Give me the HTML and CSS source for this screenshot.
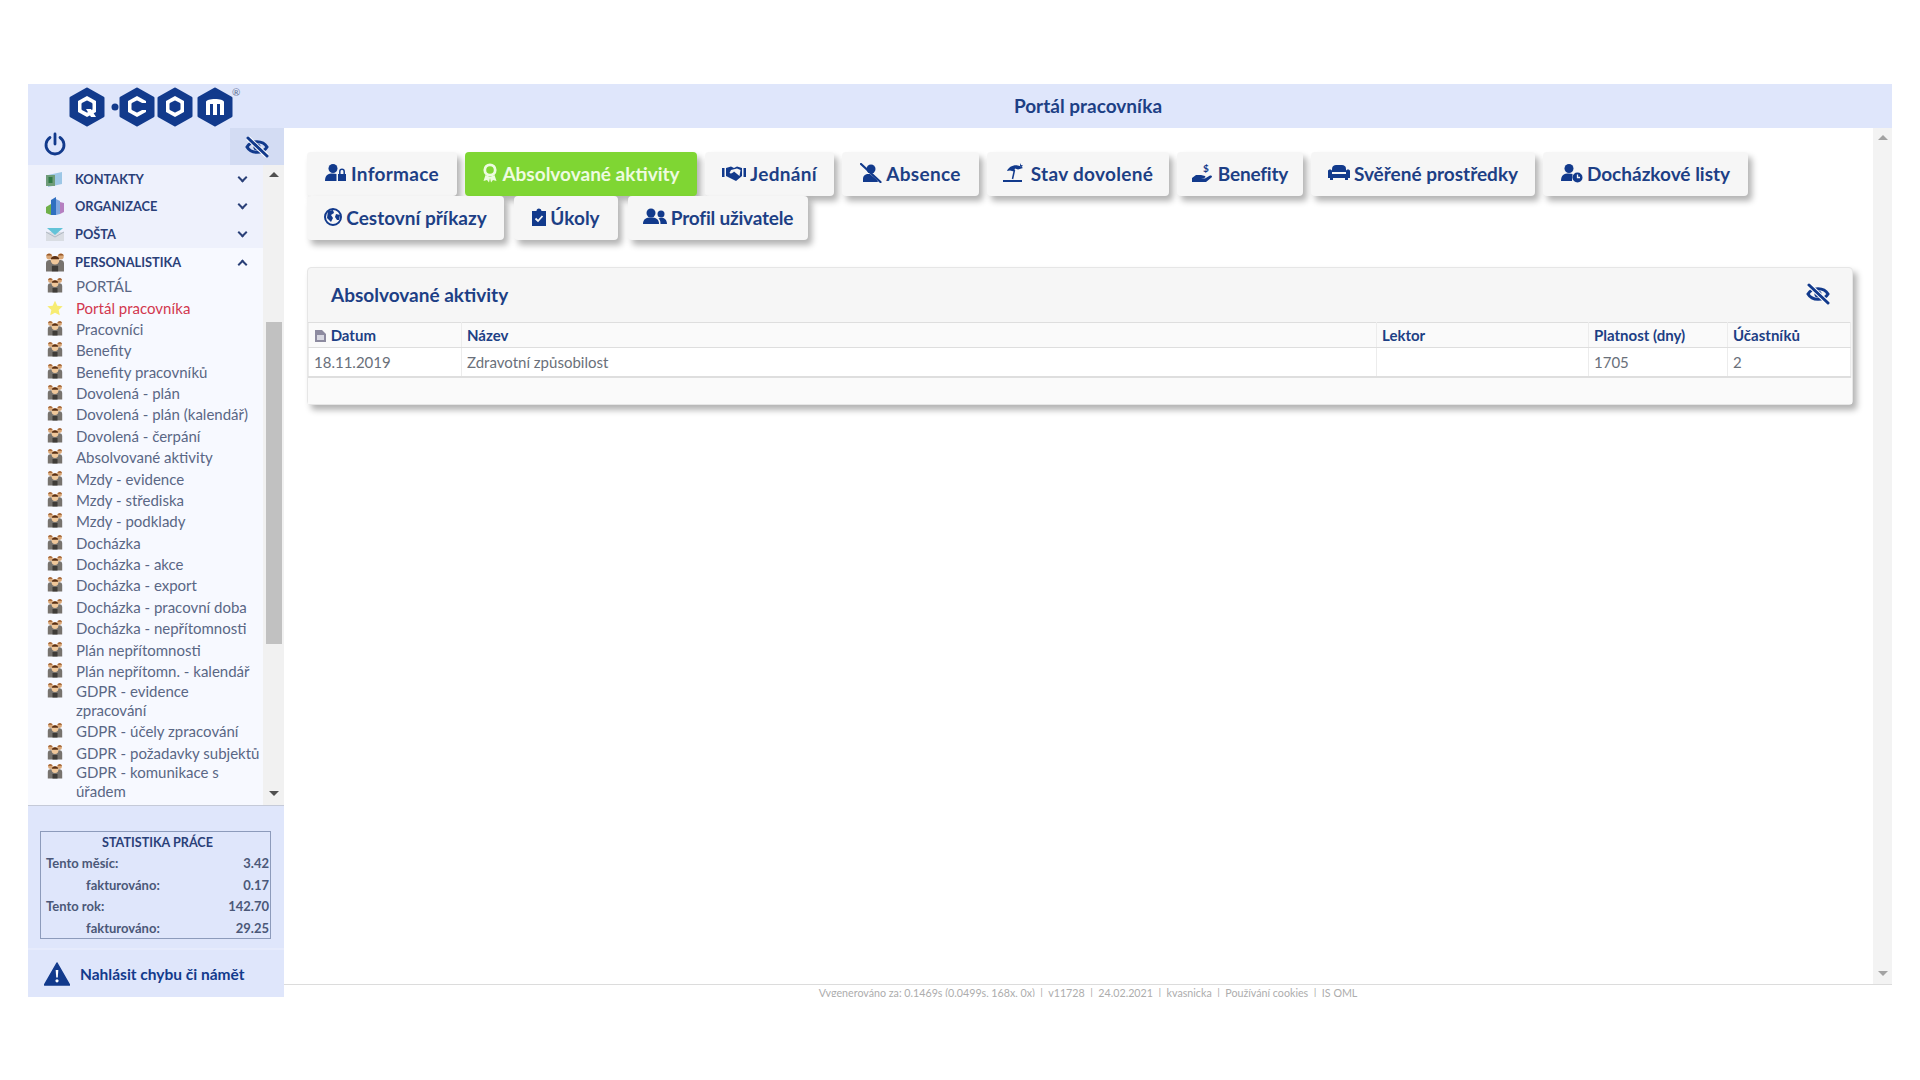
FILE: index.html
```html
<!DOCTYPE html>
<html lang="cs">
<head>
    <meta charset="UTF-8">
    <title>Portál pracovníka</title>
    <link rel="stylesheet" href="styles.css">
</head>
<body>
    <svg class="defs" width="0" height="0">
        <symbol id="i-eye" viewBox="0 0 24 24">
            <path d="M2 12C6 5 18 5 22 12C18 19 6 19 2 12Z" fill="none" stroke="currentColor" stroke-width="3"/>
            <circle cx="12" cy="12" r="3.6" fill="currentColor"/>
            <path d="M3 3L22 21" stroke="#fff" stroke-width="5"/>
            <path d="M3 3L22 21" stroke="currentColor" stroke-width="3" stroke-linecap="round"/>
        </symbol>
        <symbol id="i-staff" viewBox="0 0 16 16">
            <circle cx="3.400" cy="3.600" r="2.400" fill="#d9a777"/>
            <circle cx="12.600" cy="3.600" r="2.400" fill="#d9a777"/>
            <path d="M1 2.800C1.500 .8 5 .8 5.500 2.800ZM10.500 2.800C11 .8 14.500 .8 15 2.800Z" fill="#9a5a2a"/>
            <path d="M.8 15.500V9C.8 6.500 3 6 5 6.500H11C13 6 15.200 6.500 15.200 9V15.500Z" fill="#77736e"/>
            <circle cx="8" cy="6.500" r="3.400" fill="#efc79a"/>
            <path d="M4.600 5.800C5 2.400 11 2.400 11.400 5.800Z" fill="#5a3015"/>
            <path d="M5.500 11H10.500V15.500H5.500Z" fill="#3f3c38"/>
        </symbol>
    </svg>

    <div class="app">
        <aside class="sidebar">
            <div class="logo">
                <svg width="190" height="44" viewBox="0 0 190 44" role="img" aria-label="Q-COM">
                    <g>
                        <polygon class="hex" points="27,5 43,14 43,32 27,41 11,32 11,14"/>
                        <polygon class="hex-in" points="27,12 36,17 36,28 27,33 18,28 18,17"/>
                        <polygon class="hex" points="27,18 31,20 31,25 27,27 23,25 23,20"/>
                        <path class="hex-in" d="M26 25H31L36 33H31Z"/>
                    </g>
                    <circle cx="55" cy="23" r="3.500" fill="#123a8c"/>
                    <g>
                        <polygon class="hex" points="77,5 93,14 93,32 77,41 61,32 61,14"/>
                        <polygon class="hex-in" points="77,12 86,17 86,28 77,33 68,28 68,17"/>
                        <polygon class="hex" points="77,18 81,20 81,25 77,27 73,25 73,20"/>
                        <path class="hex" d="M79 20.500H88V24.500H79Z"/>
                    </g>
                    <g>
                        <polygon class="hex" points="115,5 131,14 131,32 115,41 99,32 99,14"/>
                        <polygon class="hex-in" points="115,12 124,17 124,28 115,33 106,28 106,17"/>
                        <polygon class="hex" points="115,18 119,20 119,25 115,27 111,25 111,20"/>
                    </g>
                    <g>
                        <polygon class="hex" points="155,5 171,14 171,32 155,41 139,32 139,14"/>
                        <path class="hex-in" d="M146 31V18C146 14 164 14 164 18V31H160V20H157V31H153V20H150V31Z"/>
                    </g>
                    <text class="reg" x="172" y="12">®</text>
                </svg>
            </div>
            <div class="tools">
                <svg class="power" width="24" height="24" viewBox="0 0 24 24">
                    <path d="M7 5.500A9 9 0 1 0 17 5.500" fill="none" stroke="currentColor" stroke-width="2.800" stroke-linecap="round"/>
                    <path d="M12 2V12" stroke="currentColor" stroke-width="2.800" stroke-linecap="round"/>
                </svg>
                <div class="tools-eye"><svg width="24" height="24"><use href="#i-eye"/></svg></div>
            </div>

            <div class="menu">
                <div class="menu-list">
                    <div class="group">
                        <svg class="group-icon" width="20" height="20" viewBox="0 0 20 20">
                            <path d="M3 6L17 3V15L3 18Z" fill="#9dc7e6"/>
                            <path d="M1 6H10V17H1Z" fill="#6f9c7a"/>
                            <path d="M3.500 8H7.500V14H3.500Z" fill="#2f7a45"/>
                        </svg>
                        <span>KONTAKTY</span><i class="chev"></i>
                    </div>
                    <div class="group">
                        <svg class="group-icon" width="20" height="20" viewBox="0 0 20 20">
                            <path d="M1 11L6 8V19L1 17Z" fill="#6fb04a"/>
                            <path d="M6 4L11 1V19L6 19Z" fill="#2f6fc0"/>
                            <path d="M11 3L15 5V18L11 19Z" fill="#7fa6e0"/>
                            <path d="M15 6L19 7V16L15 18Z" fill="#b57fc0"/>
                        </svg>
                        <span>ORGANIZACE</span><i class="chev"></i>
                    </div>
                    <div class="group">
                        <svg class="group-icon" width="20" height="20" viewBox="0 0 20 20">
                            <path d="M1 8H19V17H1Z" fill="#d9dde3"/>
                            <path d="M2 4H18L10 11Z" fill="#63c3d8"/>
                            <path d="M1 8L10 13L19 8" fill="none" stroke="#b0b8c4"/>
                        </svg>
                        <span>POŠTA</span><i class="chev"></i>
                    </div>
                    <div class="group group-open">
                        <svg class="group-icon" width="20" height="20"><use href="#i-staff"/></svg>
                        <span>PERSONALISTIKA</span><i class="chev chev-up"></i>
                    </div>
                    <ul class="items">
                        <li><svg width="16" height="16"><use href="#i-staff"/></svg><span>PORTÁL</span></li>
                        <li class="current">
                            <svg width="18" height="18" viewBox="0 0 24 24"><path d="M12 1L15.500 8.500L23.500 9.500L17.500 15L19.200 23L12 19L4.800 23L6.500 15L.5 9.500L8.500 8.500Z" fill="#f7ec72"/></svg>
                            <span>Portál pracovníka</span>
                        </li>
                        <li><svg width="16" height="16"><use href="#i-staff"/></svg><span>Pracovníci</span></li>
                        <li><svg width="16" height="16"><use href="#i-staff"/></svg><span>Benefity</span></li>
                        <li><svg width="16" height="16"><use href="#i-staff"/></svg><span>Benefity pracovníků</span></li>
                        <li><svg width="16" height="16"><use href="#i-staff"/></svg><span>Dovolená - plán</span></li>
                        <li><svg width="16" height="16"><use href="#i-staff"/></svg><span>Dovolená - plán (kalendář)</span></li>
                        <li><svg width="16" height="16"><use href="#i-staff"/></svg><span>Dovolená - čerpání</span></li>
                        <li><svg width="16" height="16"><use href="#i-staff"/></svg><span>Absolvované aktivity</span></li>
                        <li><svg width="16" height="16"><use href="#i-staff"/></svg><span>Mzdy - evidence</span></li>
                        <li><svg width="16" height="16"><use href="#i-staff"/></svg><span>Mzdy - střediska</span></li>
                        <li><svg width="16" height="16"><use href="#i-staff"/></svg><span>Mzdy - podklady</span></li>
                        <li><svg width="16" height="16"><use href="#i-staff"/></svg><span>Docházka</span></li>
                        <li><svg width="16" height="16"><use href="#i-staff"/></svg><span>Docházka - akce</span></li>
                        <li><svg width="16" height="16"><use href="#i-staff"/></svg><span>Docházka - export</span></li>
                        <li><svg width="16" height="16"><use href="#i-staff"/></svg><span>Docházka - pracovní doba</span></li>
                        <li><svg width="16" height="16"><use href="#i-staff"/></svg><span>Docházka - nepřítomnosti</span></li>
                        <li><svg width="16" height="16"><use href="#i-staff"/></svg><span>Plán nepřítomnosti</span></li>
                        <li><svg width="16" height="16"><use href="#i-staff"/></svg><span>Plán nepřítomn. - kalendář</span></li>
                        <li class="two-line"><svg width="16" height="16"><use href="#i-staff"/></svg><span>GDPR - evidence<br>zpracování</span></li>
                        <li><svg width="16" height="16"><use href="#i-staff"/></svg><span>GDPR - účely zpracování</span></li>
                        <li><svg width="16" height="16"><use href="#i-staff"/></svg><span>GDPR - požadavky subjektů</span></li>
                        <li class="two-line"><svg width="16" height="16"><use href="#i-staff"/></svg><span>GDPR - komunikace s<br>úřadem</span></li>
                    </ul>
                </div>
                <div class="scrollbar scrollbar-menu">
                    <i class="arrow-up"></i>
                    <div class="thumb"></div>
                    <i class="arrow-down"></i>
                </div>
            </div>

            <div class="stats">
                <div class="stats-box">
                    <div class="stats-title">STATISTIKA PRÁCE</div>
                    <div class="stats-row"><span>Tento měsíc:</span><span>3.42</span></div>
                    <div class="stats-row stats-sub"><span>fakturováno:</span><span>0.17</span></div>
                    <div class="stats-row"><span>Tento rok:</span><span>142.70</span></div>
                    <div class="stats-row stats-sub"><span>fakturováno:</span><span>29.25</span></div>
                </div>
            </div>

            <div class="report">
                <svg width="26" height="24" viewBox="0 0 26 24">
                    <path d="M13 1L25.500 23H.5Z" fill="#123a8c" stroke="#123a8c" stroke-width="1.500" stroke-linejoin="round"/>
                    <path d="M11.700 8H14.300L13.800 15.500H12.200Z" fill="#fff"/>
                    <circle cx="13" cy="18.800" r="1.600" fill="#fff"/>
                </svg>
                <span>Nahlásit chybu či námět</span>
            </div>
        </aside>

        <main class="main">
            <header class="title-bar">Portál pracovníka</header>
            <div class="body-wrap">
                <div class="content">
                    <nav class="tabs">
                        <a class="tab w-info wide">
                            <svg width="22" height="20" viewBox="0 0 22 20"><circle cx="8" cy="5.500" r="4.500"/><path d="M0 18C0 12 3 10.500 8 10.500C9.500 10.500 10.500 10.700 11.500 11V18Z"/><path d="M13 11H21V18H13Z"/><path d="M14.800 11V8.500A2.200 2.200 0 0 1 19.200 8.500V11" fill="none" stroke="currentColor" stroke-width="1.500"/></svg>
                            Informace
                        </a>
                        <a class="tab tab-active w-abs">
                            <svg width="16" height="20" viewBox="0 0 16 20"><circle cx="8" cy="7" r="5.200" fill="none" stroke="currentColor" stroke-width="2.800"/><path d="M3.500 12L1.500 18L5 17L7 19.500L8 15L9 19.500L11 17L14.500 18L12.500 12L8 14Z"/></svg>
                            Absolvované aktivity
                        </a>
                        <a class="tab w-jed wide">
                            <svg width="24" height="18" viewBox="0 0 24 18"><path d="M0 4H2.500V13H0ZM21.500 4H24V13H21.500Z"/><path d="M4 4L9 2.500L12 4L15 2.500L20 4V12L14 17L6 13L4 12ZM9 6L7.500 9C9 10 11 9 12 7.500L17.500 12L18.500 6L15 4.500Z" fill-rule="evenodd"/></svg>
                            Jednání
                        </a>
                        <a class="tab w-absence wide">
                            <svg width="22" height="20" viewBox="0 0 22 20"><circle cx="11" cy="6" r="4.500"/><path d="M3 19V16C3 12 6 10.500 10 11L17 17L18 19Z"/><path d="M1 1L20.500 19" stroke="currentColor" stroke-width="2.200" stroke-linecap="round"/></svg>
                            Absence
                        </a>
                        <a class="tab w-stav wide">
                            <svg width="24" height="20" viewBox="0 0 24 20"><path d="M4 8C6 2 15 0 20 5L15 6.500L12 5.500L11 8.500L7 7.500Z"/><path d="M11.500 7L9.500 16" stroke="currentColor" stroke-width="1.500"/><path d="M0 17H19V19H0Z"/><path d="M17 0L18 2L20 2.500L18.500 4L17 3Z"/></svg>
                            Stav dovolené
                        </a>
                        <a class="tab w-ben narrow">
                            <svg width="22" height="20" viewBox="0 0 22 20"><path d="M0 15L4 12H9L13 13C14 14 13 15 12 15H9L13 15.500L18 12.500C20 12 20.500 13.500 19.500 14.500L14 19H0Z"/><text class="icon-dollar" x="11" y="9">$</text></svg>
                            Benefity
                        </a>
                        <a class="tab w-sve">
                            <svg width="22" height="18" viewBox="0 0 22 18"><path d="M4 5C4 2 6 1 8 1H14C16 1 18 2 18 5V8H4Z"/><path d="M0 7C0 6 1 5.500 2 5.500C3 5.500 4 6 4 7V10H18V7C18 6 19 5.500 20 5.500C21 5.500 22 6 22 7V14H0Z"/><path d="M2 14H5V16H2ZM17 14H20V16H17Z"/></svg>
                            Svěřené prostředky
                        </a>
                        <a class="tab w-doch">
                            <svg width="22" height="20" viewBox="0 0 22 20"><circle cx="8" cy="5.500" r="4.500"/><path d="M0 18C0 12 3 10.500 8 10.500C9.500 10.500 10.500 10.700 11.500 11L11 18Z"/><circle cx="16.500" cy="14.500" r="5"/><path d="M16.500 11.500V14.500H19" fill="none" stroke="#f6f6f6" stroke-width="1.300"/></svg>
                            Docházkové listy
                        </a>
                        <a class="tab w-cest">
                            <svg width="18" height="18" viewBox="0 0 18 18"><circle cx="9" cy="9" r="8" fill="none" stroke="currentColor" stroke-width="2"/><path d="M4 3L9 2L10 5L7 7L9 10L7 14L3 10ZM16 7L12 6L11 9L13 12L15 12Z"/></svg>
                            Cestovní příkazy
                        </a>
                        <a class="tab w-ukoly">
                            <svg width="14" height="18" viewBox="0 0 14 18"><path d="M0 3H4.500A2.500 2.500 0 0 1 9.500 3H14V18H0Z"/><path d="M3.500 10.500L6 13L10.500 8" fill="none" stroke="#f6f6f6" stroke-width="1.800"/></svg>
                            Úkoly
                        </a>
                        <a class="tab w-profil narrow">
                            <svg width="24" height="18" viewBox="0 0 24 18"><circle cx="8" cy="5" r="4.500"/><path d="M0 16C0 11 3 9.500 8 9.500S16 11 16 16Z"/><circle cx="18" cy="6" r="3.500"/><path d="M17.500 16C17.500 13 17 12 15.500 10.500C19 8.800 24 10.500 24 16Z"/></svg>
                            Profil uživatele
                        </a>
                    </nav>

                    <section class="panel">
                        <div class="panel-head">
                            <h2>Absolvované aktivity</h2>
                            <svg width="24" height="24"><use href="#i-eye"/></svg>
                        </div>
                        <table class="grid">
                            <thead>
                                <tr>
                                    <th class="col-date">
                                        <svg width="13" height="14" viewBox="0 0 13 14"><path d="M1 1H8L12 5V13H1Z" fill="#8d8ba0"/><path d="M3 6H10V11H3Z" fill="#d8d8e2"/></svg>
                                        Datum
                                    </th>
                                    <th class="col-name">Název</th>
                                    <th class="col-lector">Lektor</th>
                                    <th class="col-valid">Platnost (dny)</th>
                                    <th>Účastníků</th>
                                </tr>
                            </thead>
                            <tbody>
                                <tr>
                                    <td>18.11.2019</td>
                                    <td>Zdravotní způsobilost</td>
                                    <td></td>
                                    <td>1705</td>
                                    <td>2</td>
                                </tr>
                            </tbody>
                        </table>
                        <div class="panel-foot"></div>
                    </section>
                </div>
                <div class="scrollbar scrollbar-page">
                    <i class="arrow-up"></i>
                    <i class="arrow-down"></i>
                </div>
            </div>
            <footer class="foot">Vygenerováno za: 0.1469s (0.0499s, 168x, 0x) &nbsp;|&nbsp; v11728 &nbsp;|&nbsp; 24.02.2021 &nbsp;|&nbsp; kvasnicka &nbsp;|&nbsp; Používání cookies &nbsp;|&nbsp; IS QML</footer>
        </main>
    </div>
</body>
</html>
```

FILE: styles.css
```css
* {
    box-sizing: border-box;
}

body {
    margin: 0;
    padding: 84px 28px 0;
    background-color: #fff;
    font-family: Lato, "Liberation Sans", sans-serif;
    color: #123a8c;
}

.defs {
    position: absolute;
}

.app {
    display: flex;
    width: 1864px;
    height: 913px;
}

/* sidebar */
.sidebar {
    width: 256px;
    display: flex;
    flex-direction: column;
    flex-shrink: 0;
    background-color: #dfe6fb;
}

.logo {
    height: 44px;
    padding-left: 32px;
}

.logo svg {
    display: block;
}

.hex {
    fill: #123a8c;
    stroke: #123a8c;
    stroke-width: 3;
    stroke-linejoin: round;
}

.hex-in {
    fill: #fff;
}

.reg {
    fill: #5f6f92;
    font-size: 10px;
}

.tools {
    height: 37px;
    display: flex;
    justify-content: space-between;
    align-items: center;
}

.power {
    margin-left: 15px;
    margin-top: -6px;
}

.tools-eye {
    width: 54px;
    height: 37px;
    background-color: #d3dcf3;
    display: flex;
    align-items: center;
    justify-content: center;
}

.menu {
    height: 641px;
    display: flex;
    background-color: #eef1fc;
    border-bottom: 1px solid #c5cad8;
    overflow: hidden;
}

.menu-list {
    width: 235px;
}

.group {
    height: 28px;
    display: flex;
    align-items: center;
    padding-left: 17px;
    font-size: 12.800px;
    font-weight: 700;
    color: #2a4078;
}

.group:first-child {
    height: 27px;
}

.group span {
    margin-left: 10px;
    flex: 1;
}

.group-open {
    background-color: #f7f9ff;
}

.chev {
    width: 7px;
    height: 7px;
    margin-right: 17px;
    margin-top: -3px;
    border-right: 2px solid #2a4078;
    border-bottom: 2px solid #2a4078;
    transform: rotate(45deg);
}

.chev-up {
    margin-top: 4px;
    transform: rotate(225deg);
}

.items {
    list-style: none;
    margin: 0;
    padding: 0 0 0 19px;
    height: 530px;
    background-color: #f7f9ff;
}

.items li {
    display: flex;
    padding: 1.200px 0;
    line-height: 19px;
    font-size: 15px;
    color: #5a6785;
}

.items li svg {
    width: 16px;
    flex-shrink: 0;
    margin-right: 13px;
}

.items .current {
    color: #d2374e;
}

.items .two-line {
    margin-top: -1.500px;
}

.scrollbar {
    background-color: #f1f1f1;
    display: flex;
    flex-direction: column;
    justify-content: space-between;
    align-items: center;
}

.scrollbar-menu {
    width: 21px;
    padding: 7px 0 9px;
}

.scrollbar-page {
    width: 19px;
    padding: 7px 0 8px;
    background-color: #f3f3f3;
    flex-shrink: 0;
}

.thumb {
    position: absolute;
    top: 322px;
    width: 16px;
    height: 322px;
    background-color: #c1c1c1;
}

.arrow-up {
    width: 0;
    height: 0;
    border-left: 5px solid transparent;
    border-right: 5px solid transparent;
    border-bottom: 5px solid #505050;
}

.arrow-down {
    width: 0;
    height: 0;
    border-left: 5px solid transparent;
    border-right: 5px solid transparent;
    border-top: 5px solid #505050;
}

.scrollbar-page .arrow-up {
    border-bottom-color: #a3a3a3;
}

.scrollbar-page .arrow-down {
    border-top-color: #a3a3a3;
}

.stats {
    height: 144px;
    padding: 25px 13px 0 12px;
    border-bottom: 2px solid #e6ebfc;
}

.stats-box {
    height: 108px;
    border: 1px solid #8d9bbb;
    padding: 0 1px 0 5px;
    font-size: 13px;
    font-weight: 700;
    color: #4b5878;
}

.stats-title {
    text-align: center;
    line-height: 21px;
    font-size: 12.600px;
    color: #2a4078;
}

.stats-row {
    display: flex;
    justify-content: space-between;
    line-height: 21.500px;
}

.stats-sub {
    padding-left: 40px;
}

.report {
    flex: 1;
    display: flex;
    align-items: center;
    padding-left: 16px;
    gap: 10px;
    font-size: 15.500px;
    font-weight: 700;
    color: #123a8c;
}

/* main */
.main {
    flex: 1;
    display: flex;
    flex-direction: column;
    min-width: 0;
}

.title-bar {
    height: 44px;
    line-height: 44px;
    text-align: center;
    background-color: #dfe6fb;
    font-size: 19px;
    font-weight: 700;
    color: #1d3f85;
}

.body-wrap {
    height: 856px;
    display: flex;
}

.content {
    flex: 1;
    padding: 24px 0 0 23px;
}

.tabs {
    display: flex;
    flex-wrap: wrap;
    column-gap: 8px;
    width: 1500px;
}

.tab {
    height: 44px;
    display: flex;
    align-items: center;
    justify-content: center;
    gap: 4px;
    padding-bottom: 2px;
    background-color: #f6f6f6;
    border-radius: 4px;
    box-shadow: 4px 5px 6px rgba(0, 0, 0, .3);
    font-size: 19px;
    font-weight: 700;
    color: #1d3f85;
}

.tab svg {
    fill: #123a8c;
    color: #123a8c;
    flex-shrink: 0;
}

.tab.wide {
    letter-spacing: .3px;
}

.tab.narrow {
    letter-spacing: -.2px;
}

.tab-active {
    background-color: #7fd633;
    color: #eefbe0;
}

.tab-active svg {
    fill: #eefbe0;
    color: #eefbe0;
}

.icon-dollar {
    font-size: 10px;
    font-weight: 700;
}

.w-info { width: 150px; }
.w-abs { width: 232px; }
.w-jed { width: 129px; }
.w-absence { width: 137px; }
.w-stav { width: 182px; }
.w-ben { width: 126px; }
.w-sve { width: 224px; }
.w-doch { width: 205px; }
.w-cest { width: 197px; }
.w-ukoly { width: 104px; margin-left: 2px; }
.w-profil { width: 180px; margin-left: 2px; }

.panel {
    width: 1546px;
    margin-top: 27px;
    background-color: #f6f6f6;
    border: 1px solid #e6e6e6;
    border-radius: 4px;
    box-shadow: 4px 5px 6px rgba(0, 0, 0, .3);
}

.panel-head {
    height: 54px;
    display: flex;
    align-items: center;
    justify-content: space-between;
    padding: 0 22px 2px 23px;
}

.panel-head h2 {
    margin: 0;
    font-size: 19px;
    font-weight: 700;
    color: #1d3f85;
}

.grid {
    width: 1543px;
    table-layout: fixed;
    border-collapse: collapse;
    font-size: 15px;
}

.grid th,
.grid td {
    padding: 0 5px;
    text-align: left;
    border: 1px solid #dedede;
    border-left-color: #ececec;
    border-right-color: #ececec;
}

.grid th {
    height: 25px;
    background-color: #fafafa;
    font-weight: 700;
    color: #1d3f85;
}

.grid th svg {
    vertical-align: -2px;
}

.grid td {
    height: 29px;
    background-color: #fff;
    color: #6a707a;
    border-bottom-width: 2px;
}

.col-date { width: 153px; }
.col-name { width: 915px; }
.col-lector { width: 212px; }
.col-valid { width: 139px; }

.panel-foot {
    height: 26px;
    background-color: #fafafa;
}

.foot {
    height: 13px;
    border-top: 1px solid #dcdcdc;
    text-align: center;
    font-size: 10.700px;
    line-height: 15px;
    color: #adadad;
    white-space: nowrap;
}
```
